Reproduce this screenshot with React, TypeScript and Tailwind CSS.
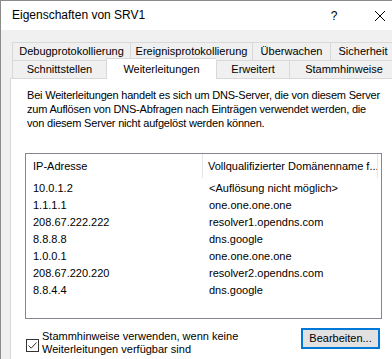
const rows = [
  ["10.0.1.2", "<Auflösung nicht möglich>"],
  ["1.1.1.1", "one.one.one.one"],
  ["208.67.222.222", "resolver1.opendns.com"],
  ["8.8.8.8", "dns.google"],
  ["1.0.0.1", "one.one.one.one"],
  ["208.67.220.220", "resolver2.opendns.com"],
  ["8.8.4.4", "dns.google"],
];

const App = () => {
  return (
    <div className="flex h-[359px] w-[392px] flex-col overflow-hidden border-l border-t border-[#8a8a8a] bg-[#f0f0f0] font-['Liberation_Sans',Arial,sans-serif] text-[11px] text-black">
      {/* title bar */}
      <div className="flex h-[29px] shrink-0 items-center bg-white pl-[11px] text-[12px]">
        <span className="mt-[-2px]">Eigenschaften von SRV1</span>
        <div className="ml-auto flex items-center">
          <span className="w-[46px] text-center">?</span>
          <div className="w-[35px] pl-[18px]">
            <svg width="10" height="10" viewBox="0 0 10 10">
              <path d="M0 0 L10 10 M10 0 L0 10" stroke="#000" strokeWidth="1" />
            </svg>
          </div>
        </div>
      </div>

      <div className="flex flex-1 flex-col pl-[9px] pt-[12px]">
        {/* tabs */}
        <div className="ml-[2px] flex h-[18px] shrink-0">
          <div className="flex w-[118px] shrink-0 items-center justify-center border-l border-t border-[#d9d9d9]">Debugprotokollierung</div>
          <div className="flex w-[122px] shrink-0 items-center justify-center border-l border-t border-[#d9d9d9]">Ereignisprotokollierung</div>
          <div className="flex w-[78px] shrink-0 items-center justify-center border-l border-t border-[#d9d9d9]">Überwachen</div>
          <div className="flex w-[66px] shrink-0 items-center justify-center border-x border-t border-[#d9d9d9]">Sicherheit</div>
        </div>
        <div className="ml-[2px] flex h-[18px] shrink-0">
          <div className="flex w-[94px] shrink-0 items-center justify-center border-l border-t border-[#d9d9d9]">Schnittstellen</div>
          <div className="relative z-10 -mt-[2px] flex h-[21px] w-[110px] shrink-0 items-start justify-center border-l border-t border-[#d9d9d9] bg-white pt-[2px]">Weiterleitungen</div>
          <div className="flex w-[73px] shrink-0 items-center justify-center border-l border-t border-[#d9d9d9]">Erweitert</div>
          <div className="flex w-[110px] shrink-0 items-center justify-center border-x border-t border-[#d9d9d9]">Stammhinweise</div>
        </div>

        {/* tab page */}
        <div className="flex-1 border-l border-t border-[#d9d9d9] bg-white pl-[14px] pt-[9px]">
          <p className="whitespace-nowrap pl-[2px] leading-[14px] tracking-[-0.2px]">
            Bei Weiterleitungen handelt es sich um DNS-Server, die von diesem Server
            <br />
            zum Auflösen von DNS-Abfragen nach Einträgen verwendet werden, die
            <br />
            von diesem Server nicht aufgelöst werden können.
          </p>

          <div className="mt-[23px] h-[166px] w-[357px] border border-[#828790] bg-white">
            <div className="flex h-[24px] items-center whitespace-nowrap">
              <div className="flex h-full w-[177px] items-center border-r border-[#e5e5e5] pl-[7px]">IP-Adresse</div>
              <div className="flex h-full w-[175px] items-center overflow-hidden border-r border-[#e5e5e5] pl-[5px]">Vollqualifizierter Domänenname f...</div>
            </div>
            <div className="mt-[2px]">
              {rows.map(([ip, name], i) => (
                <div key={i} className="flex h-[17px] items-center">
                  <div className="w-[178px] pl-[7px]">{ip}</div>
                  <div className="pl-[5px]">{name}</div>
                </div>
              ))}
            </div>
          </div>

          <div className="flex w-[357px] items-start justify-between">
            <label className="mt-[11px] flex items-start pl-[1px]">
              <span className="mt-[9px] flex h-[13px] w-[13px] shrink-0 items-center justify-center border border-[#333]">
                <svg width="11" height="11" viewBox="0 0 11 11">
                  <path d="M1.5 5.5 L4.2 8.2 L9.5 2.5" stroke="#333" strokeWidth="1" fill="none" />
                </svg>
              </span>
              <span className="ml-[3px] leading-[13px]">
                Stammhinweise verwenden, wenn keine
                <br />
                Weiterleitungen verfügbar sind
              </span>
            </label>
            <button className="mr-[2px] mt-[9px] flex h-[21px] w-[79px] items-center justify-center border-2 border-[#0078d7] bg-[#e1e1e1]">
              Bearbeiten...
            </button>
          </div>
        </div>
      </div>
    </div>
  );
};

export default App;
